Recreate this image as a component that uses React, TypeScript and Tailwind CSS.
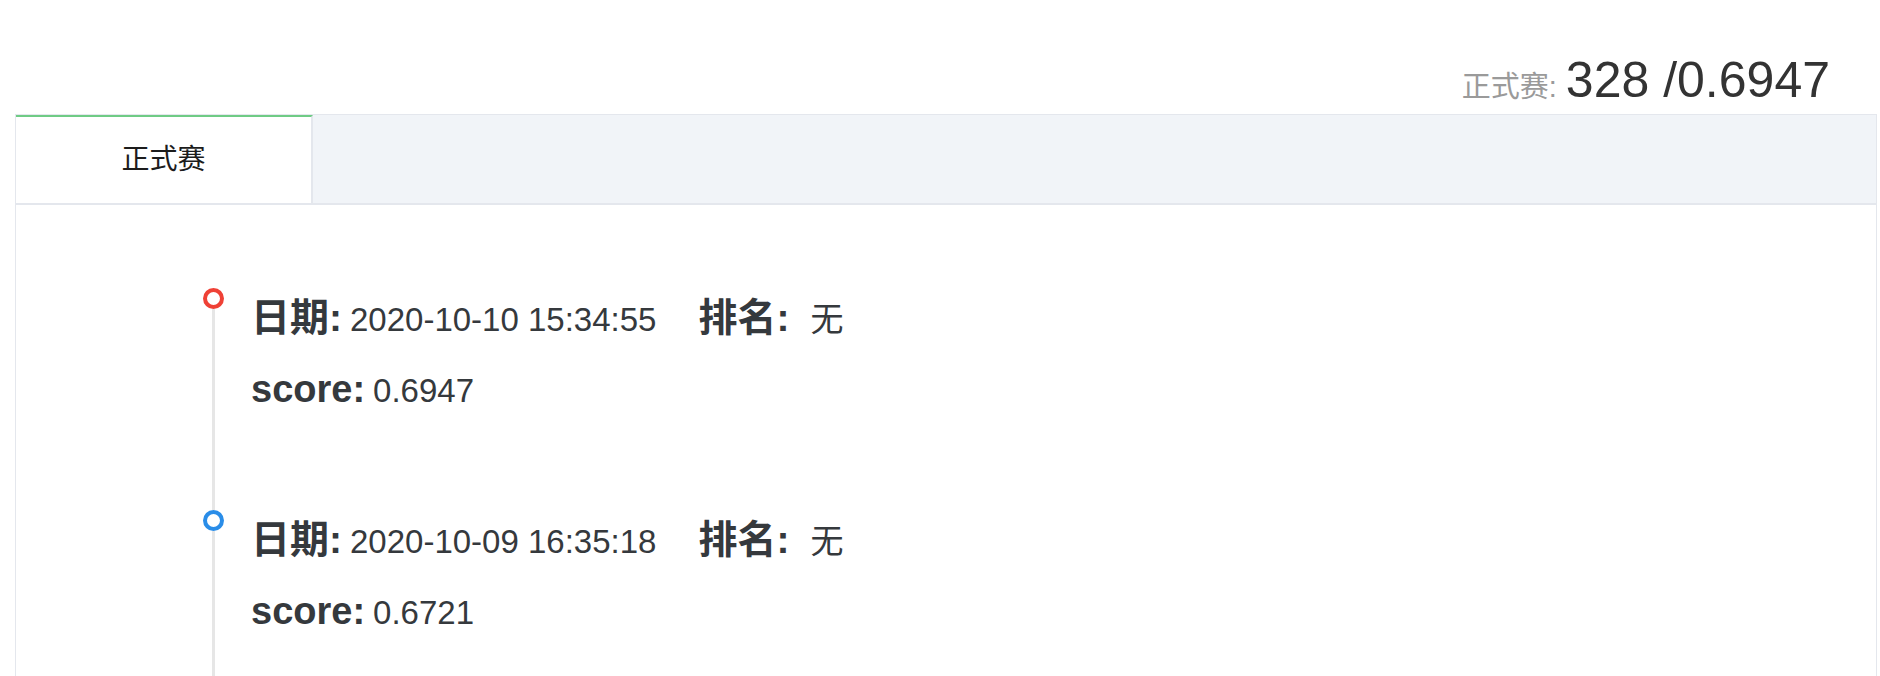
import React from 'react';

type Record = { date: string; rank: string; score: string; dot: string };

const records: Record[] = [
  { date: '2020-10-10 15:34:55', rank: '无', score: '0.6947', dot: 'border-[#ef4136]' },
  { date: '2020-10-09 16:35:18', rank: '无', score: '0.6721', dot: 'border-[#2a8de8]' },
];

function TimelineItem({ r }: { r: Record }) {
  return (
    <div className="flex">
      {/* dot + rail */}
      <div className="flex flex-col items-center w-[21px] shrink-0">
        <div className={`w-[21px] h-[21px] rounded-full border-4 bg-white ${r.dot}`} />
        <div className="w-[3px] flex-1 bg-[#e6e6e6]" />
      </div>

      <div className="ml-[27px] pt-[6px] pb-[95px] text-[#35393d]">
        <div className="leading-[48px] text-[33px] whitespace-nowrap">
          <span className="text-[39px] font-bold">日期:</span>
          <span className="ml-[8px]">{r.date}</span>
          <span className="ml-[42px] text-[39px] font-bold">排名:</span>
          <span className="ml-[21px]">{r.rank}</span>
        </div>
        <div className="mt-[21px] leading-[48px] text-[33px] whitespace-nowrap">
          <span className="text-[38px] font-bold">score:</span>
          <span className="ml-[8px]">{r.score}</span>
        </div>
      </div>
    </div>
  );
}

export default function App() {
  return (
    <div className="w-[1880px] h-[676px] overflow-hidden bg-white font-['Liberation_Sans','Noto_Sans_CJK_SC',sans-serif]">
      {/* summary */}
      <div className="h-[114px] pt-[55px] pr-[50px] flex justify-end items-baseline whitespace-nowrap">
        <span className="text-[29px] text-[#9a9a9a]">正式赛:</span>
        <span className="ml-[9px] text-[50px] leading-none text-[#333333]">328 /0.6947</span>
      </div>

      {/* tabs card */}
      <div className="ml-[15px] mr-[3px] border border-[#e4e7ed]">
        <div className="flex h-[90px] bg-[#f1f4f8] border-b-2 border-[#e4e7ed]">
          <div className="w-[297px] bg-white border-t-2 border-t-[#6fcb85] border-r-2 border-r-[#e4e7ed] flex items-center justify-center text-[28px] text-[#1c1c1c]">
            正式赛
          </div>
        </div>

        <div className="pl-[187px] pt-[83px] h-[600px]">
          {records.map((r) => (
            <TimelineItem key={r.date} r={r} />
          ))}
        </div>
      </div>
    </div>
  );
}
